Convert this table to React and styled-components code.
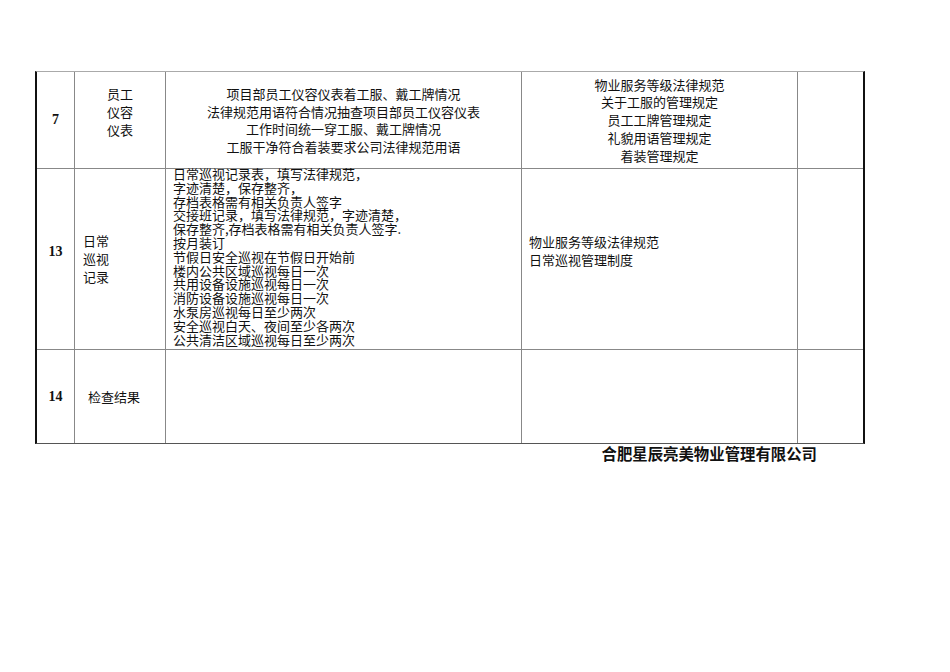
import React from "react";
import styled, { createGlobalStyle } from "styled-components";

const Global = createGlobalStyle`
  html, body { margin: 0; padding: 0; background: #fff; }
  body { font-family: "Noto Sans CJK SC", "Liberation Serif", serif; color: #111; }
`;

const Page = styled.div`
  width: 950px;
  height: 672px;
  padding: 71px 0 0 35px;
  box-sizing: border-box;
`;

const Sheet = styled.div`
  width: 830px;
`;

const Table = styled.div`
  display: grid;
  grid-template-columns: 38px 91px 356px 276px 65px;
  grid-template-rows: 97px 181px 93px;
  border-left: 2px solid #111;
  border-right: 2px solid #111;
  border-top: 1px solid #aaa;
  border-bottom: 1px solid #555;
`;

const Cell = styled.div`
  box-sizing: border-box;
  display: flex;
  flex-direction: column;
  justify-content: ${(p) => (p.$top ? "flex-start" : "center")};
  align-items: ${(p) => (p.$left ? "flex-start" : "center")};
  text-align: ${(p) => (p.$left ? "left" : "center")};
  padding: ${(p) => p.$pad || "0"};
  border-right: ${(p) => (p.$last ? "none" : "1px solid #888")};
  border-bottom: ${(p) => (p.$bottom ? "none" : "1px solid #888")};
  font-size: 13px;
  line-height: ${(p) => p.$lh || "18px"};
  white-space: nowrap;
  overflow: visible;
`;

const Num = styled.span`
  font-family: "Liberation Serif", serif;
  font-weight: bold;
  font-size: 14px;
`;

const Lines = styled.div`
  margin-top: ${(p) => p.$shift || "0"};
`;

const Footer = styled.div`
  text-align: right;
  padding-right: 48px;
  font-family: "Noto Sans CJK SC", "Liberation Sans", sans-serif;
  font-weight: bold;
  font-size: 15.4px;
  line-height: 18px;
  color: #111;
`;

const rows = [
  {
    num: "7",
    numPad: "0",
    name: ["员工", "仪容", "仪表"],
    nameLeft: false,
    namePad: "0 0 16px 0",
    items: [
      "项目部员工仪容仪表着工服、戴工牌情况",
      "法律规范用语符合情况抽查项目部员工仪容仪表",
      "工作时间统一穿工服、戴工牌情况",
      "工服干净符合着装要求公司法律规范用语",
    ],
    itemsLeft: false,
    itemsLh: "17.5px",
    rules: [
      "物业服务等级法律规范",
      "关于工服的管理规定",
      "员工工牌管理规定",
      "礼貌用语管理规定",
      "着装管理规定",
    ],
    rulesLeft: false,
    rulesPad: "0",
  },
  {
    num: "13",
    numPad: "0 0 14px 0",
    name: ["日常", "巡视", "记录"],
    nameLeft: true,
    namePad: "0 0 0 8px",
    items: [
      "日常巡视记录表，填写法律规范，",
      "字迹清楚，保存整齐，",
      "存档表格需有相关负责人签字",
      "交接班记录，填写法律规范，字迹清楚，",
      "保存整齐,存档表格需有相关负责人签字.",
      "按月装订",
      "节假日安全巡视在节假日开始前",
      "楼内公共区域巡视每日一次",
      "共用设备设施巡视每日一次",
      "消防设备设施巡视每日一次",
      "水泵房巡视每日至少两次",
      "安全巡视白天、夜间至少各两次",
      "公共清洁区域巡视每日至少两次",
    ],
    itemsLeft: true,
    itemsTop: true,
    itemsPad: "0 0 0 7px",
    itemsLh: "13.8px",
    itemsShift: "-2px",
    rules: ["物业服务等级法律规范", "日常巡视管理制度"],
    rulesLeft: true,
    rulesPad: "0 0 16px 7px",
  },
  {
    num: "14",
    numPad: "0",
    name: ["检查结果"],
    nameLeft: true,
    namePad: "0 0 0 13px",
    items: [],
    rules: [],
    bottom: true,
  },
];

export default function App() {
  return (
    <Page>
      <Global />
      <Sheet>
        <Table>
          {rows.map((r) => (
            <React.Fragment key={r.num}>
              <Cell $bottom={r.bottom} $pad={r.numPad}>
                <Num>{r.num}</Num>
              </Cell>
              <Cell $bottom={r.bottom} $left={r.nameLeft} $pad={r.namePad}>
                {r.name.map((t) => (
                  <div key={t}>{t}</div>
                ))}
              </Cell>
              <Cell
                $bottom={r.bottom}
                $left={r.itemsLeft}
                $top={r.itemsTop}
                $pad={r.itemsPad}
                $lh={r.itemsLh}
              >
                <Lines $shift={r.itemsShift}>
                  {r.items.map((t) => (
                    <div key={t}>{t}</div>
                  ))}
                </Lines>
              </Cell>
              <Cell $bottom={r.bottom} $left={r.rulesLeft} $pad={r.rulesPad} $lh="17.8px">
                {r.rules.map((t) => (
                  <div key={t}>{t}</div>
                ))}
              </Cell>
              <Cell $bottom={r.bottom} $last />
            </React.Fragment>
          ))}
        </Table>
        <Footer>合肥星辰亮美物业管理有限公司</Footer>
      </Sheet>
    </Page>
  );
}
